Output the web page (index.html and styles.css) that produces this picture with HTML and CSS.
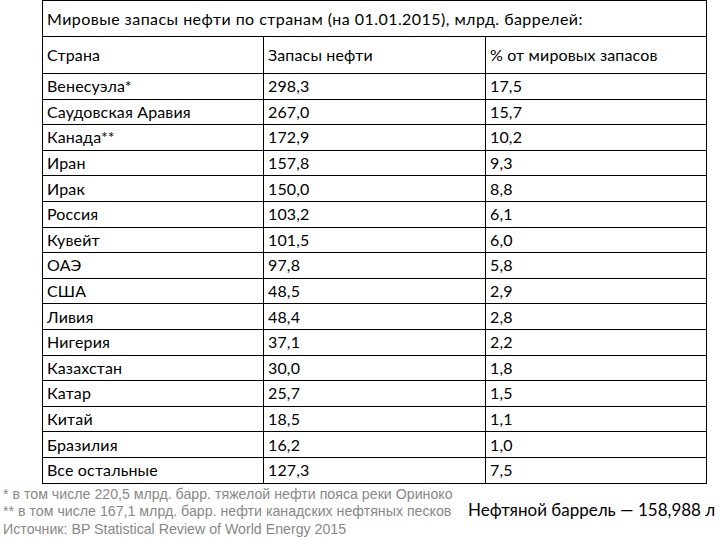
FILE: index.html
```html
<!DOCTYPE html>
<html lang="ru">
<head>
<meta charset="utf-8">
<link rel="stylesheet" href="styles.css">
</head>
<body>
<div class="page">
  <table class="oil">
    <colgroup>
      <col class="c1"><col class="c2"><col class="c3">
    </colgroup>
    <tr class="title"><td colspan="3">Мировые запасы нефти по странам (на 01.01.2015), млрд. баррелей:</td></tr>
    <tr class="head"><td>Страна</td><td>Запасы нефти</td><td>% от мировых запасов</td></tr>
    <tr class="row"><td>Венесуэла*</td><td>298,3</td><td>17,5</td></tr>
    <tr class="row"><td>Саудовская Аравия</td><td>267,0</td><td>15,7</td></tr>
    <tr class="row"><td>Канада**</td><td>172,9</td><td>10,2</td></tr>
    <tr class="row"><td>Иран</td><td>157,8</td><td>9,3</td></tr>
    <tr class="row"><td>Ирак</td><td>150,0</td><td>8,8</td></tr>
    <tr class="row"><td>Россия</td><td>103,2</td><td>6,1</td></tr>
    <tr class="row"><td>Кувейт</td><td>101,5</td><td>6,0</td></tr>
    <tr class="row"><td>ОАЭ</td><td>97,8</td><td>5,8</td></tr>
    <tr class="row"><td>США</td><td>48,5</td><td>2,9</td></tr>
    <tr class="row"><td>Ливия</td><td>48,4</td><td>2,8</td></tr>
    <tr class="row"><td>Нигерия</td><td>37,1</td><td>2,2</td></tr>
    <tr class="row"><td>Казахстан</td><td>30,0</td><td>1,8</td></tr>
    <tr class="row"><td>Катар</td><td>25,7</td><td>1,5</td></tr>
    <tr class="row"><td>Китай</td><td>18,5</td><td>1,1</td></tr>
    <tr class="row"><td>Бразилия</td><td>16,2</td><td>1,0</td></tr>
    <tr class="row"><td>Все остальные</td><td>127,3</td><td>7,5</td></tr>
  </table>
  <div class="foot">
    <div class="notes">
      <div>* в том числе 220,5 млрд. барр. тяжелой нефти пояса реки Ориноко</div>
      <div>** в том числе 167,1 млрд. барр. нефти канадских нефтяных песков</div>
      <div>Источник: BP Statistical Review of World Energy 2015</div>
    </div>
    <div class="barrel">Нефтяной баррель — 158,988 л</div>
  </div>
</div>
</body>
</html>
```

FILE: styles.css
```css
html, body {
  margin: 0;
  padding: 0;
  background: #fff;
}
.page {
  width: 720px;
  height: 540px;
  overflow: hidden;
  padding-left: 3px;
  box-sizing: border-box;
}
.oil {
  margin-left: 39px;
  border-collapse: collapse;
  table-layout: fixed;
  width: 664px;
  font-family: Lato, "Open Sans", sans-serif;
  font-size: 16px;
  letter-spacing: 0.15px;
  color: #000;
}
.c1 { width: 221px; }
.c2 { width: 222px; }
.c3 { width: 221px; }
.oil td {
  border: 1px solid #000;
  padding: 0 4px;
  white-space: nowrap;
  overflow: hidden;
  line-height: 18px;
}
.title td {
  height: 35px;
  letter-spacing: 0.45px;
}
.head td { height: 36px; }
.row td { height: 24.6px; }
.foot {
  display: flex;
  align-items: center;
  margin-top: 2px;
}
.notes {
  font-family: "Liberation Sans", Arial, sans-serif;
  font-size: 14.2px;
  line-height: 17.5px;
  color: #888;
  width: 465px;
  white-space: nowrap;
}
.barrel {
  font-family: Lato, "Open Sans", sans-serif;
  font-size: 17px;
  color: #000;
  white-space: nowrap;
  margin-bottom: 4px;
}
```
